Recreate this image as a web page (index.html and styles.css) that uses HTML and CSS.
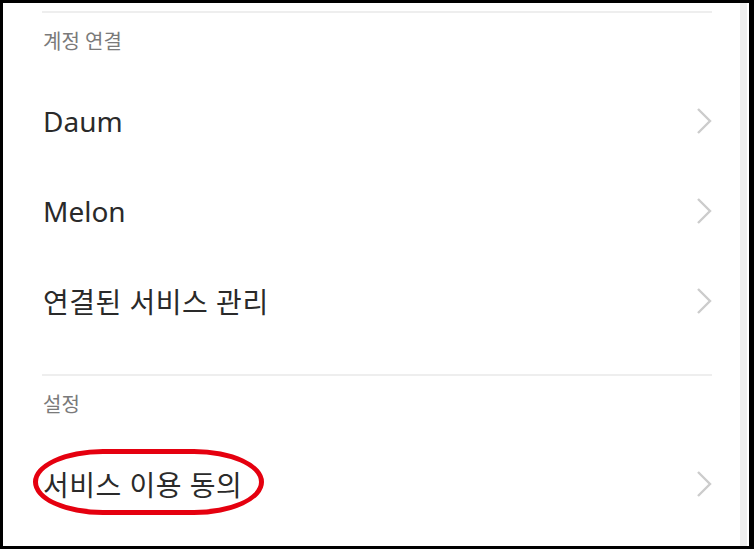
FILE: index.html
```html
<!DOCTYPE html>
<html lang="ko">
<head>
<meta charset="utf-8">
<title>설정</title>
<link rel="stylesheet" href="styles.css">
</head>
<body>
<div class="frame">
  <main class="content">
    <section class="group">
      <div class="divider"></div>
      <div class="group-label">계정 연결</div>
      <div class="row"><span class="row-text">Daum</span><svg class="chev" width="16" height="28" viewBox="0 0 16 28"><polyline points="2,2 14,14 2,26" fill="none" stroke="#cccccc" stroke-width="2.4"/></svg></div>
      <div class="row"><span class="row-text">Melon</span><svg class="chev" width="16" height="28" viewBox="0 0 16 28"><polyline points="2,2 14,14 2,26" fill="none" stroke="#cccccc" stroke-width="2.4"/></svg></div>
      <div class="row"><span class="row-text row-text-ko">연결된 서비스 관리</span><svg class="chev" width="16" height="28" viewBox="0 0 16 28"><polyline points="2,2 14,14 2,26" fill="none" stroke="#cccccc" stroke-width="2.4"/></svg></div>
    </section>
    <section class="group group-second">
      <div class="divider"></div>
      <div class="group-label">설정</div>
      <div class="row"><span class="row-text row-text-ko">서비스 이용 동의</span><span class="mark"></span><svg class="chev" width="16" height="28" viewBox="0 0 16 28"><polyline points="2,2 14,14 2,26" fill="none" stroke="#cccccc" stroke-width="2.4"/></svg></div>
    </section>
  </main>
  <div class="scrollbar"></div>
</div>
</body>
</html>
```
FILE: styles.css
```css
html, body {
  margin: 0;
  padding: 0;
  background: #000;
}
.frame {
  box-sizing: border-box;
  width: 754px;
  height: 549px;
  border-style: solid;
  border-color: #000;
  border-width: 3px 5px 3px 3px;
  background: #fff;
  display: flex;
  overflow: hidden;
  font-family: "Noto Sans", "Noto Sans CJK KR", sans-serif;
}
.content {
  flex: 1;
  padding: 8px 28px 0 39px;
}
.scrollbar {
  width: 7px;
  background: #eeeeee;
  margin-right: 2px;
}
.divider {
  height: 2px;
  background: #eeeeee;
}
.group-second {
  margin-top: 28px;
}
.group-label {
  font-size: 20px;
  line-height: 20px;
  padding: 19px 0 24px 1px;
  color: #7a7a7a;
  font-feature-settings: "palt";
}
.row {
  position: relative;
  height: 90px;
  display: flex;
  align-items: center;
  justify-content: space-between;
}
.row-text {
  font-size: 28px;
  color: #2a2a2a;
  padding-left: 1px;
  font-feature-settings: "palt";
}
.row-text-ko {
  letter-spacing: 0.5px;
}
.chev {
  display: block;
}
.mark {
  position: absolute;
  left: -9px;
  top: 10px;
  width: 231px;
  height: 66px;
  box-sizing: border-box;
  border: 5px solid #e5000f;
  border-radius: 70px / 33px;
}
```
